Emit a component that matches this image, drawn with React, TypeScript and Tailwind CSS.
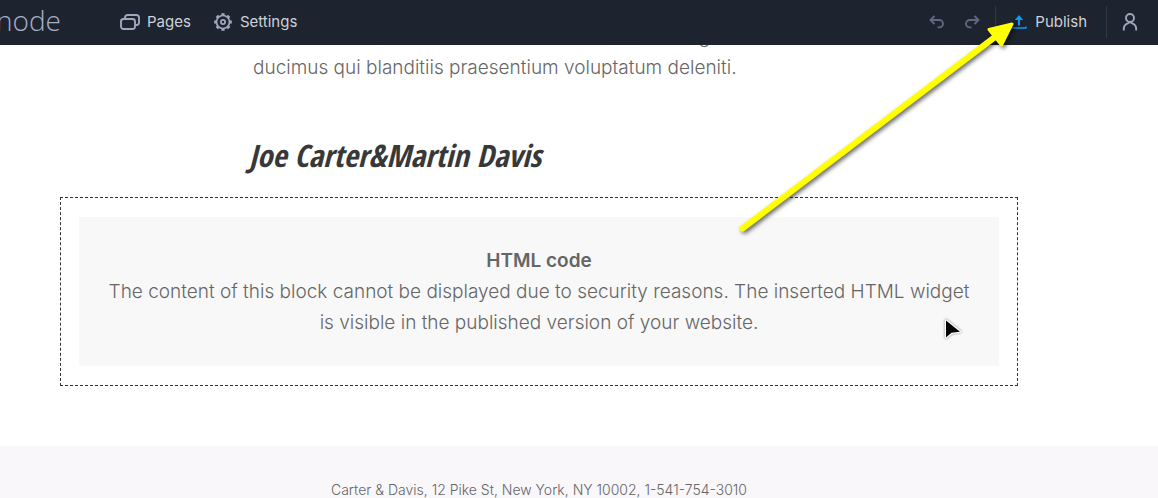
import React from "react";

function PagesIcon() {
  return (
    <svg className="h-4 w-5" viewBox="0 0 20 16" fill="none" stroke="currentColor" strokeWidth="1.900" aria-hidden="true">
      <rect x="1" y="5" width="14" height="10" rx="2.500" />
      <path d="M5 4.500V3.500A2.500 2.500 0 0 1 7.500 1h9A2.500 2.500 0 0 1 19 3.500v5A2.500 2.500 0 0 1 16.500 11H15" />
    </svg>
  );
}

const teeth = [0, 45, 90, 135, 180, 225, 270, 315];

function GearIcon() {
  return (
    <svg className="h-[18px] w-[18px]" viewBox="0 0 18 18" fill="none" stroke="currentColor" aria-hidden="true">
      <circle cx="9" cy="9" r="6.500" strokeWidth="1.700" />
      <circle cx="9" cy="9" r="2.100" strokeWidth="1.800" />
      {teeth.map((angle) => (
        <path key={angle} d="M7.400 1.300h3.200" strokeWidth="2.200" transform={`rotate(${angle} 9 9)`} />
      ))}
    </svg>
  );
}

function UndoIcon({ className = "" }: { className?: string }) {
  return (
    <svg className={`h-[14px] w-[15px] ${className}`} viewBox="0 0 15 14" fill="none" stroke="currentColor" strokeWidth="1.900" aria-hidden="true">
      <path d="M5.500 1 1.500 5l4 4M1.500 5h8.800a3.700 3.700 0 0 1 0 7.400H8.500" />
    </svg>
  );
}

function PublishIcon() {
  return (
    <svg className="h-[14px] w-4 text-[#0a9bff]" viewBox="0 0 16 14" aria-hidden="true">
      <path d="M8 0l4.200 5H9v5.500H7V5H3.800z" fill="currentColor" />
      <path d="M1 11.500V13h14v-1.500" fill="none" stroke="currentColor" strokeWidth="1.400" />
    </svg>
  );
}

function UserIcon() {
  return (
    <svg className="h-[18px] w-4" viewBox="0 0 16 18" fill="none" stroke="currentColor" strokeWidth="1.900" aria-hidden="true">
      <circle cx="8" cy="5" r="4" />
      <path d="M1.800 17.500v-1.500A6 6 0 0 1 5.800 10.300L8 9l2.200 1.300a6 6 0 0 1 4 5.700v1.500" />
    </svg>
  );
}

function TopBar() {
  return (
    <header className="flex h-[45px] items-center bg-[#1d232f] pb-px text-[15px] text-[#ced1d8]">
      <a href="#home" className="flex w-[61px] justify-end overflow-hidden pb-1 font-['Open_Sans',sans-serif] text-[28px] leading-[40px] font-light text-[#a8aec6]">
        node
      </a>
      <nav className="ml-[59px] flex items-center gap-[23px]">
        <button className="flex items-center gap-[7px]">
          <span className="text-[#a0a6bd]"><PagesIcon /></span>
          Pages
        </button>
        <button className="flex items-center gap-2">
          <span className="text-[#a0a6bd]"><GearIcon /></span>
          Settings
        </button>
      </nav>
      <div className="ml-auto flex items-center">
        <div className="mr-[15px] flex gap-[21px] text-[#606880]">
          <button aria-label="Undo"><UndoIcon /></button>
          <button aria-label="Redo"><UndoIcon className="-scale-x-100" /></button>
        </div>
        <button className="flex h-8 items-center gap-2 border-x border-[#31384a] pr-[19px] pl-[15px]">
          <PublishIcon />
          Publish
        </button>
        <button aria-label="Account" className="mr-5 ml-[15px] text-[#a0a6bd]"><UserIcon /></button>
      </div>
    </header>
  );
}

function HtmlBlock() {
  return (
    <section className="mx-[60px] border border-dashed border-[#333] px-[18px] py-[19px]">
      <div className="bg-[#f8f8f8] px-5 py-7 text-center">
        <h2 className="font-semibold">HTML code</h2>
        <p>
          The content of this block cannot be displayed due to security reasons. The inserted HTML widget
          <br />
          is visible in the published version of your website.
        </p>
      </div>
    </section>
  );
}

function Pointer() {
  return (
    <svg className="absolute top-[317px] left-[942px] h-6 w-6" viewBox="0 0 24 24" aria-hidden="true">
      <path
        d="M4 3.500v17l5.500-4.800 8.500-1z"
        fill="#000"
        stroke="#fff"
        strokeWidth="2.500"
        strokeLinejoin="round"
        paintOrder="stroke"
        className="drop-shadow-[0_0_1px_rgba(0,0,0,0.5)]"
      />
    </svg>
  );
}

function Arrow() {
  return (
    <svg className="pointer-events-none absolute top-0 left-[700px] h-[250px] w-[340px] drop-shadow-[2px_2px_2px_rgba(0,0,0,0.6)]" viewBox="0 0 340 250" aria-hidden="true">
      <path d="M42.500 228.500 295 37" stroke="#ffff00" strokeWidth="6" strokeLinecap="round" />
      <path d="M312 24 289 29.500 301.500 45z" fill="#ffff00" stroke="#ffff00" strokeWidth="3" strokeLinejoin="round" />
    </svg>
  );
}

export default function App() {
  return (
    <div className="relative flex min-h-screen flex-col overflow-hidden bg-white font-['Inter','Liberation_Sans',sans-serif]">
      <TopBar />
      <main className="overflow-hidden pr-20 text-[19px] leading-[31px] font-light text-[#666]">
        <p className="-mt-6 ml-[253px]">
          <span className="block pl-[430px]">dignissimos</span>
          ducimus qui blanditiis praesentium voluptatum deleniti.
        </p>
        <p className="mt-11 mb-[14px] ml-[249px] font-['Open_Sans_Condensed','Liberation_Sans_Narrow',cursive] text-[31px] leading-[56px] font-bold text-[#383838] italic">
          Joe Carter&amp;Martin Davis
        </p>
        <HtmlBlock />
      </main>
      <footer className="mt-[60px] h-[52px] bg-[#f9f7fa] pt-[34px] pr-20 text-center text-[14px] leading-5 font-light text-[#666]">
        Carter &amp; Davis, 12 Pike St, New York, NY 10002, 1-541-754-3010
      </footer>
      <Arrow />
      <Pointer />
    </div>
  );
}
